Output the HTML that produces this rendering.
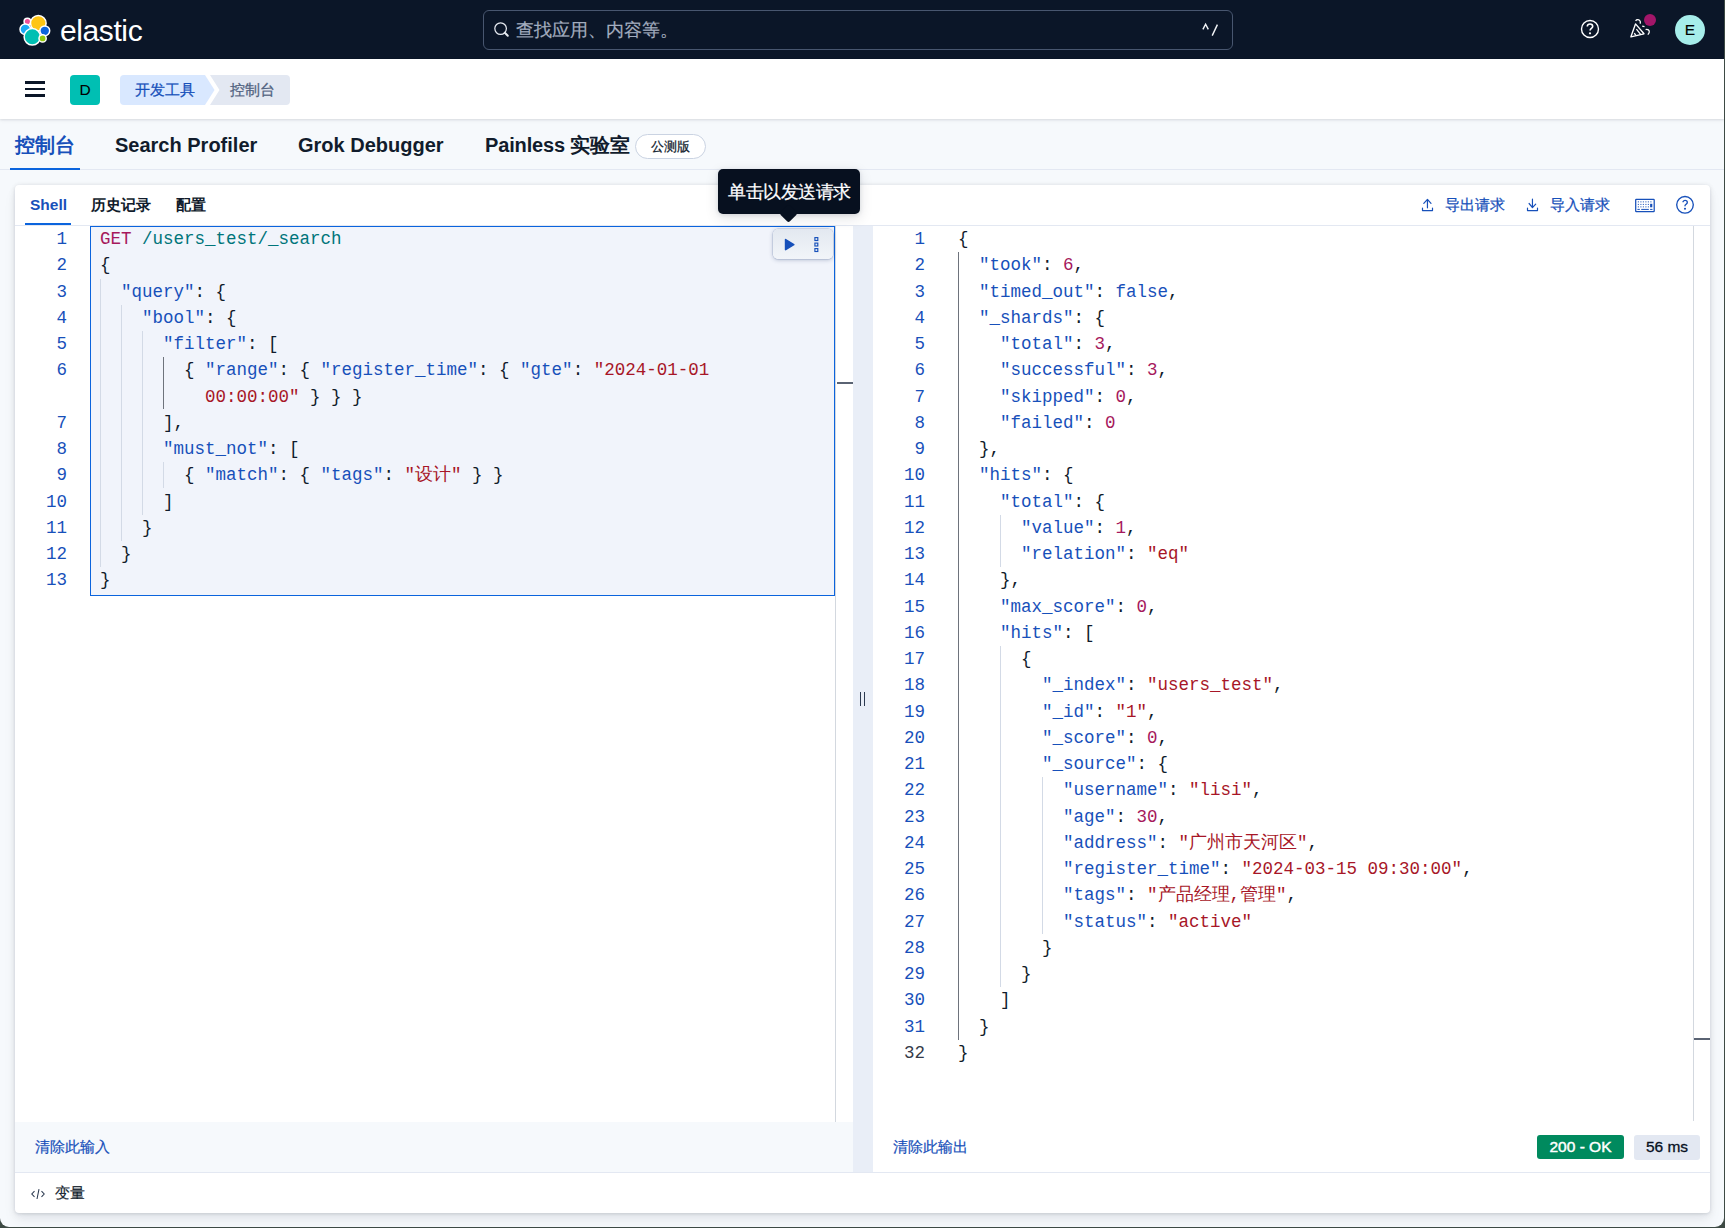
<!DOCTYPE html>
<html><head><meta charset="utf-8">
<style>
*{box-sizing:border-box;margin:0;padding:0}
html,body{width:1725px;height:1228px;overflow:hidden;background:#3d4a44}
body{font-family:"Liberation Sans",sans-serif;position:relative}
.abs{position:absolute}
#win{position:absolute;left:0;top:0;width:1724px;height:1227px;background:#f6f9fc;border-radius:0 0 9px 9px;overflow:hidden}
#hdr{position:absolute;left:0;top:0;width:1724px;height:59px;background:#0b1628}
#bar2{position:absolute;left:0;top:59px;width:1724px;height:60px;background:#fff;box-shadow:0 1px 2px rgba(17,28,44,.10),0 2px 4px rgba(17,28,44,.04);z-index:2}
#tabs{position:absolute;left:0;top:119px;width:1724px;height:51px;background:#f6f9fc;border-bottom:1px solid #e3e8f2}
.tab{position:absolute;top:133px;line-height:24px;font-size:20px;font-weight:bold;color:#111c2c;white-space:nowrap}
#panel{position:absolute;left:15px;top:185px;width:1695px;height:1028px;background:#fff;border-radius:4px;box-shadow:0 0 5px rgba(17,28,44,.07),0 1px 3px rgba(17,28,44,.07),0 3px 8px rgba(17,28,44,.06),0 8px 14px rgba(17,28,44,.05)}
.mono{font-family:"Liberation Mono",monospace;font-size:17.5px;line-height:26.25px;white-space:pre}
.ln{color:#1750ba}
.k{color:#1750ba}
.p{color:#111c2c}
.s{color:#a71627}
.n{color:#a6185c}
.m{color:#a6185c}
.u{color:#00757a}
.g{position:absolute;width:1px;background:#d3dae6}
.ga{position:absolute;width:1px;background:#6e737c}
.mono div{height:26.25px}
.md{-webkit-text-stroke:0.35px currentColor}
</style></head><body>
<div id="win">
  <div id="hdr">
    <svg class="abs" style="left:0;top:0" width="60" height="59" viewBox="0 0 60 59">
      <g stroke="#fff" stroke-width="1.5">
      <circle cx="27.4" cy="21.5" r="3.3" fill="#f04e98"/>
      <circle cx="25.3" cy="29.2" r="5.3" fill="#1ba9f5"/>
      <circle cx="38.3" cy="23.2" r="7.8" fill="#fec514"/>
      <circle cx="44.8" cy="30.8" r="4.9" fill="#0b64dd"/>
      <circle cx="32.3" cy="36.8" r="8.2" fill="#00bfb3"/>
      <circle cx="42.6" cy="38.4" r="3.6" fill="#93c90e"/>
      </g>
    </svg>
    <div class="abs" style="left:60px;top:14px;font-size:30px;color:#fff;letter-spacing:-0.4px">elastic</div>
    <div class="abs" style="left:483px;top:10px;width:750px;height:40px;border:1px solid #48566f;border-radius:6px;background:#0b1628"></div>
    <svg class="abs" style="left:493px;top:21px" width="18" height="18" viewBox="0 0 18 18"><circle cx="7.6" cy="7.6" r="5.8" fill="none" stroke="#e6eaf0" stroke-width="1.25"/><path d="M11.8 11.8l3 3" stroke="#e6eaf0" stroke-width="2" stroke-linecap="round"/></svg>
    <div class="abs" style="left:516px;top:18px;font-size:17.5px;color:#a3adbf;-webkit-text-stroke:0.2px #a3adbf">查找应用、内容等。</div>
    <svg class="abs" style="left:1195px;top:15px" width="30" height="30" viewBox="0 0 30 30"><path d="M7.9 14.4L10.6 9.2L13.3 14.4M17.2 20.6L22.4 9.6" fill="none" stroke="#f0f2f5" stroke-width="1.45"/></svg>
    <svg class="abs" style="left:1579px;top:18px" width="22" height="22" viewBox="0 0 22 22"><circle cx="11" cy="11" r="8.5" fill="none" stroke="#fff" stroke-width="1.4"/><path d="M8.3 8.6c0-1.6 1.2-2.6 2.7-2.6s2.7 1 2.7 2.4c0 1.9-2.6 2-2.6 4" fill="none" stroke="#fff" stroke-width="1.6"/><circle cx="11" cy="15.3" r="1.1" fill="#fff"/></svg>
    <svg class="abs" style="left:1626px;top:15px" width="30" height="26" viewBox="0 0 30 26">
      <path d="M4.9 21.8 L9.5 8.9 L18 18.8 Z" fill="none" stroke="#fff" stroke-width="1.35" stroke-linejoin="round"/>
      <path d="M10.4 14.2 L14.6 19.3 M8.3 18.1 L9.8 20.4" stroke="#fff" stroke-width="1.3"/>
      <path d="M9.6 5.8 C10.6 4.2 13.6 4 14.3 6.6 C14.5 7.4 14.2 8.2 14 8.6" fill="none" stroke="#fff" stroke-width="1.3"/>
      <path d="M16.2 11.2 L18.5 11.6" stroke="#fff" stroke-width="1.2"/>
      <path d="M19.6 14.6 C21.6 13.8 23.8 15.2 23.2 17.4 C23 18.2 22.4 19 21.8 19.6" fill="none" stroke="#fff" stroke-width="1.3"/>
    </svg>
    <div class="abs" style="left:1643.8px;top:13.7px;width:12.6px;height:12.6px;border-radius:50%;background:#a31669"></div>
    <div class="abs" style="left:1675px;top:15px;width:30px;height:30px;border-radius:50%;background:#a6edea;color:#000;font-size:15.5px;text-align:center;line-height:30px;-webkit-text-stroke:0.15px #000">E</div>
  </div>
  <div id="bar2">
    <div class="abs" style="left:25px;top:22.3px;width:20px;height:2.5px;background:#0b1628"></div>
    <div class="abs" style="left:25px;top:28.8px;width:20px;height:2.5px;background:#0b1628"></div>
    <div class="abs" style="left:25px;top:35.2px;width:20px;height:2.5px;background:#0b1628"></div>
    <div class="abs" style="left:70px;top:16px;width:30px;height:30px;border-radius:4px;background:#00bfb3;color:#000;font-size:15.5px;text-align:center;line-height:29px;-webkit-text-stroke:0.1px #000">D</div>
    <svg class="abs" style="left:120px;top:16px" width="171" height="30" viewBox="0 0 171 30">
      <path d="M90 0 H166 A4 4 0 0 1 170 4 V26 A4 4 0 0 1 166 30 H90 L99.5 15 Z" fill="#e3e8f2"/>
      <path d="M4 0 H85 L94.5 15 L85 30 H4 A4 4 0 0 1 0 26 V4 A4 4 0 0 1 4 0Z" fill="#d9e8ff"/>
    </svg>
    <div class="abs" style="left:135px;top:22px;font-size:15px;color:#1750ba;-webkit-text-stroke:0.25px #1750ba">开发工具</div>
    <div class="abs" style="left:230px;top:22px;font-size:15px;color:#516381;-webkit-text-stroke:0.25px #516381">控制台</div>
  </div>
  <div id="tabs"></div>
  <div class="tab" style="left:15px;color:#1750ba">控制台</div>
  <div class="abs" style="left:10px;top:167.5px;width:70px;height:2.5px;background:#0b64dd"></div>
  <div class="tab" style="left:115px">Search Profiler</div>
  <div class="tab" style="left:298px">Grok Debugger</div>
  <div class="tab" style="left:485px;letter-spacing:-0.15px">Painless 实验室</div>
  <div class="abs" style="left:635px;top:134px;width:71px;height:25px;border:1px solid #cad3e2;border-radius:12.5px;background:#fff;font-size:12.5px;color:#111c2c;-webkit-text-stroke:0.25px #111c2c;text-align:center;line-height:25px">公测版</div>

  <div id="panel"></div>
  <!-- panel tabs -->
  <div class="abs" style="left:30px;top:196px;font-size:15.5px;font-weight:bold;color:#1750ba">Shell</div>
  <div class="abs" style="left:91px;top:196px;font-size:15px;font-weight:bold;color:#111c2c">历史记录</div>
  <div class="abs" style="left:176px;top:196px;font-size:15px;font-weight:bold;color:#111c2c">配置</div>
  <div class="abs" style="left:25px;top:222.5px;width:46px;height:2.5px;background:#0b64dd"></div>
  <div class="abs" style="left:15px;top:225px;width:1695px;height:1px;background:#e3e8f2"></div>
  <!-- right actions -->
  <svg class="abs" style="left:1415px;top:192px" width="30" height="24" viewBox="0 0 30 24"><path d="M12.45 15.8V7.6M8.8 11.4L12.45 7.4L16 11.4M7.5 16.1V18.6H17.5V16.1" fill="none" stroke="#1750ba" stroke-width="1.2" stroke-linecap="round" stroke-linejoin="round"/></svg>
  <div class="abs" style="left:1445px;top:196px;font-size:15px;color:#1750ba;-webkit-text-stroke:0.25px #1750ba">导出请求</div>
  <svg class="abs" style="left:1520px;top:192px" width="30" height="24" viewBox="0 0 30 24"><path d="M12.45 7.2V15.4M9.1 11.5L12.45 15.6L15.7 12.2M7.5 16.1V18.6H17.5V16.1" fill="none" stroke="#1750ba" stroke-width="1.2" stroke-linecap="round" stroke-linejoin="round"/></svg>
  <div class="abs" style="left:1550px;top:196px;font-size:15px;color:#1750ba;-webkit-text-stroke:0.25px #1750ba">导入请求</div>
  <svg class="abs" style="left:1630px;top:192px" width="30" height="24" viewBox="0 0 30 24"><rect x="5.7" y="7.4" width="18.5" height="12.1" rx="0.6" fill="none" stroke="#1750ba" stroke-width="1.25"/><g fill="#1750ba" opacity="0.8"><rect x="7.8" y="9.3" width="1.2" height="1.1"/><rect x="10.3" y="9.3" width="1.2" height="1.1"/><rect x="12.8" y="9.3" width="1.2" height="1.1"/><rect x="15.3" y="9.3" width="1.2" height="1.1"/><rect x="17.8" y="9.3" width="1.2" height="1.1"/><rect x="20.3" y="9.3" width="1.2" height="1.1"/><rect x="7.8" y="11.9" width="1.2" height="1.1"/><rect x="10.3" y="11.9" width="1.2" height="1.1"/><rect x="12.8" y="11.9" width="1.2" height="1.1"/><rect x="15.3" y="11.9" width="1.2" height="1.1"/><rect x="17.8" y="11.9" width="1.2" height="1.1"/><rect x="7.8" y="14.3" width="1.2" height="1.1"/><rect x="10.3" y="14.3" width="1.2" height="1.1"/><rect x="12.8" y="14.3" width="1.2" height="1.1"/><rect x="15.3" y="14.3" width="1.2" height="1.1"/><rect x="17.8" y="14.3" width="1.2" height="1.1"/></g><g fill="#1750ba"><rect x="20.1" y="11.8" width="2.2" height="3.5"/><rect x="7.4" y="16.9" width="2.4" height="1"/><rect x="11.2" y="16.9" width="7.6" height="1"/><rect x="20.1" y="16.9" width="2.4" height="1"/></g></svg>
  <svg class="abs" style="left:1670px;top:192px" width="30" height="24" viewBox="0 0 30 24"><circle cx="15" cy="12.8" r="8.3" fill="none" stroke="#1750ba" stroke-width="1.35"/><path d="M13 9.7C13.5 8.7 14.2 8.3 15 8.3C16.3 8.3 17.3 9.2 17.3 10.4C17.3 12 15 12.3 15 13.7" fill="none" stroke="#1750ba" stroke-width="1.35" stroke-linecap="round"/><circle cx="15" cy="16.7" r="1.05" fill="#1750ba"/></svg>

  <!-- input editor -->
  <div class="abs" style="left:90px;top:226px;width:745px;height:370px;background:#f1f4fb;border:1.5px solid #0b64dd"></div>
  <div class="abs mono ln" style="left:15px;top:226px;width:52px;text-align:right"><div>1</div><div>2</div><div>3</div><div>4</div><div>5</div><div>6</div><div>&nbsp;</div><div>7</div><div>8</div><div>9</div><div>10</div><div>11</div><div>12</div><div>13</div></div>
  <div class="g" style="left:100px;top:278.5px;height:288.75px"></div>
  <div class="g" style="left:121px;top:304.75px;height:236.25px"></div>
  <div class="g" style="left:142px;top:331px;height:183.75px"></div>
  <div class="ga" style="left:163px;top:357px;height:52px"></div>
  <div class="g" style="left:163px;top:462px;height:26px"></div>
  <div class="abs mono" style="left:100px;top:226px;color:#111c2c"><div><span class="m">GET</span> <span class="u">/users_test/_search</span></div><div>{</div><div>  <span class="k">&quot;query&quot;</span>: {</div><div>    <span class="k">&quot;bool&quot;</span>: {</div><div>      <span class="k">&quot;filter&quot;</span>: [</div><div>        { <span class="k">&quot;range&quot;</span>: { <span class="k">&quot;register_time&quot;</span>: { <span class="k">&quot;gte&quot;</span>: <span class="s">&quot;2024-01-01</span></div><div>          <span class="s">00:00:00&quot;</span> } } }</div><div>      ],</div><div>      <span class="k">&quot;must_not&quot;</span>: [</div><div>        { <span class="k">&quot;match&quot;</span>: { <span class="k">&quot;tags&quot;</span>: <span class="s">&quot;设计&quot;</span> } }</div><div>      ]</div><div>    }</div><div>  }</div><div>}</div></div>
  <div class="abs" style="left:773px;top:229px;width:60px;height:30px;border-radius:5px;background:linear-gradient(#e3e8f0,#f2f5f9);box-shadow:0 0 0 0.5px rgba(60,90,150,.25),0 1px 4px rgba(40,60,110,.3)"></div>
  <svg class="abs" style="left:780px;top:234px" width="20" height="21" viewBox="0 0 20 21"><path d="M5.6 5.6 L13.8 10.6 L5.6 15.6Z" fill="#1750ba" stroke="#1750ba" stroke-width="1.6" stroke-linejoin="round"/></svg>
  <svg class="abs" style="left:810px;top:234px" width="13" height="21" viewBox="0 0 13 21"><g fill="none" stroke="#1750ba" stroke-width="1.15"><rect x="4.9" y="3.6" width="2.9" height="2.9"/><rect x="4.9" y="9.1" width="2.9" height="2.9"/><rect x="4.9" y="14.6" width="2.9" height="2.9"/></g></svg>
  <!-- input scrollbar + resizer -->
  <div class="abs" style="left:835px;top:226px;width:1px;height:896px;background:#d3d8df"></div>
  <div class="abs" style="left:837px;top:382px;width:16px;height:2px;background:#5a6373"></div>
  <div class="abs" style="left:853px;top:226px;width:20px;height:946px;background:#e9eef7"></div>
  <div class="abs" style="left:860px;top:692px;width:1.3px;height:14px;background:#2b394f"></div>
  <div class="abs" style="left:864px;top:692px;width:1.3px;height:14px;background:#2b394f"></div>
  <!-- output -->
  <div class="abs mono ln" style="left:880px;top:226px;width:45px;text-align:right"><div>1</div><div>2</div><div>3</div><div>4</div><div>5</div><div>6</div><div>7</div><div>8</div><div>9</div><div>10</div><div>11</div><div>12</div><div>13</div><div>14</div><div>15</div><div>16</div><div>17</div><div>18</div><div>19</div><div>20</div><div>21</div><div>22</div><div>23</div><div>24</div><div>25</div><div>26</div><div>27</div><div>28</div><div>29</div><div>30</div><div>31</div><div style="color:#343a48">32</div></div>
  <div class="ga" style="left:958px;top:252px;height:788px"></div>
  <div class="g" style="left:1000px;top:515px;height:52px"></div>
  <div class="g" style="left:1000px;top:646px;height:341px"></div>
  <div class="g" style="left:1042px;top:777px;height:157px"></div>
  <div class="abs mono" style="left:958px;top:226px;color:#111c2c"><div>{</div><div>  <span class="k">&quot;took&quot;</span>: <span class="n">6</span>,</div><div>  <span class="k">&quot;timed_out&quot;</span>: <span class="k">false</span>,</div><div>  <span class="k">&quot;_shards&quot;</span>: {</div><div>    <span class="k">&quot;total&quot;</span>: <span class="n">3</span>,</div><div>    <span class="k">&quot;successful&quot;</span>: <span class="n">3</span>,</div><div>    <span class="k">&quot;skipped&quot;</span>: <span class="n">0</span>,</div><div>    <span class="k">&quot;failed&quot;</span>: <span class="n">0</span></div><div>  },</div><div>  <span class="k">&quot;hits&quot;</span>: {</div><div>    <span class="k">&quot;total&quot;</span>: {</div><div>      <span class="k">&quot;value&quot;</span>: <span class="n">1</span>,</div><div>      <span class="k">&quot;relation&quot;</span>: <span class="s">&quot;eq&quot;</span></div><div>    },</div><div>    <span class="k">&quot;max_score&quot;</span>: <span class="n">0</span>,</div><div>    <span class="k">&quot;hits&quot;</span>: [</div><div>      {</div><div>        <span class="k">&quot;_index&quot;</span>: <span class="s">&quot;users_test&quot;</span>,</div><div>        <span class="k">&quot;_id&quot;</span>: <span class="s">&quot;1&quot;</span>,</div><div>        <span class="k">&quot;_score&quot;</span>: <span class="n">0</span>,</div><div>        <span class="k">&quot;_source&quot;</span>: {</div><div>          <span class="k">&quot;username&quot;</span>: <span class="s">&quot;lisi&quot;</span>,</div><div>          <span class="k">&quot;age&quot;</span>: <span class="n">30</span>,</div><div>          <span class="k">&quot;address&quot;</span>: <span class="s">&quot;广州市天河区&quot;</span>,</div><div>          <span class="k">&quot;register_time&quot;</span>: <span class="s">&quot;2024-03-15 09:30:00&quot;</span>,</div><div>          <span class="k">&quot;tags&quot;</span>: <span class="s">&quot;产品经理,管理&quot;</span>,</div><div>          <span class="k">&quot;status&quot;</span>: <span class="s">&quot;active&quot;</span></div><div>        }</div><div>      }</div><div>    ]</div><div>  }</div><div>}</div></div>
  <div class="abs" style="left:1693px;top:226px;width:1px;height:895px;background:#d3d8df"></div>
  <div class="abs" style="left:1694px;top:1038px;width:16px;height:2px;background:#5a6373"></div>
  <!-- footers -->
  <div class="abs" style="left:15px;top:1122px;width:838px;height:50px;background:#f6f9fc"></div>
  <div class="abs" style="left:35px;top:1138px;font-size:15px;color:#1750ba;-webkit-text-stroke:0.2px #1750ba">清除此输入</div>
  <div class="abs" style="left:893px;top:1138px;font-size:15px;color:#1750ba;-webkit-text-stroke:0.2px #1750ba">清除此输出</div>
  <div class="abs" style="left:1537px;top:1135px;width:87px;height:24px;border-radius:3px;background:#008a5e;color:#fff;font-size:15.5px;-webkit-text-stroke:0.45px #fff;text-align:center;line-height:24.5px">200 - OK</div>
  <div class="abs" style="left:1634px;top:1135px;width:66px;height:25px;border-radius:3px;background:#e3e8f2;color:#07101f;font-size:15.5px;-webkit-text-stroke:0.3px #07101f;text-align:center;line-height:24.5px">56 ms</div>
  <div class="abs" style="left:15px;top:1172px;width:1695px;height:1px;background:#e3e8f2"></div>
  <svg class="abs" style="left:30px;top:1187px" width="16" height="14" viewBox="0 0 16 14"><path d="M4.5 4.2L1.8 7l2.7 2.8M11.5 4.2l2.7 2.8-2.7 2.8M9 2.2L7 12" fill="none" stroke="#2b394f" stroke-width="1.05"/></svg>
  <div class="abs" style="left:55px;top:1184px;font-size:15px;color:#111c2c;-webkit-text-stroke:0.2px #111c2c">变量</div>
  <!-- tooltip -->
  <div class="abs" style="left:718px;top:169px;width:142px;height:45px;border-radius:5px;background:#07101f;box-shadow:0 1px 4px rgba(17,28,44,.12),0 4px 14px rgba(17,28,44,.12)"></div>
  <div class="abs" style="left:782px;top:207px;width:13px;height:13px;background:#07101f;transform:rotate(45deg);border-radius:2px"></div>
  <div class="abs" style="left:728px;top:180px;font-size:17.5px;letter-spacing:-0.45px;color:#fff;-webkit-text-stroke:0.25px #fff">单击以发送请求</div>

</div>
</body></html>
